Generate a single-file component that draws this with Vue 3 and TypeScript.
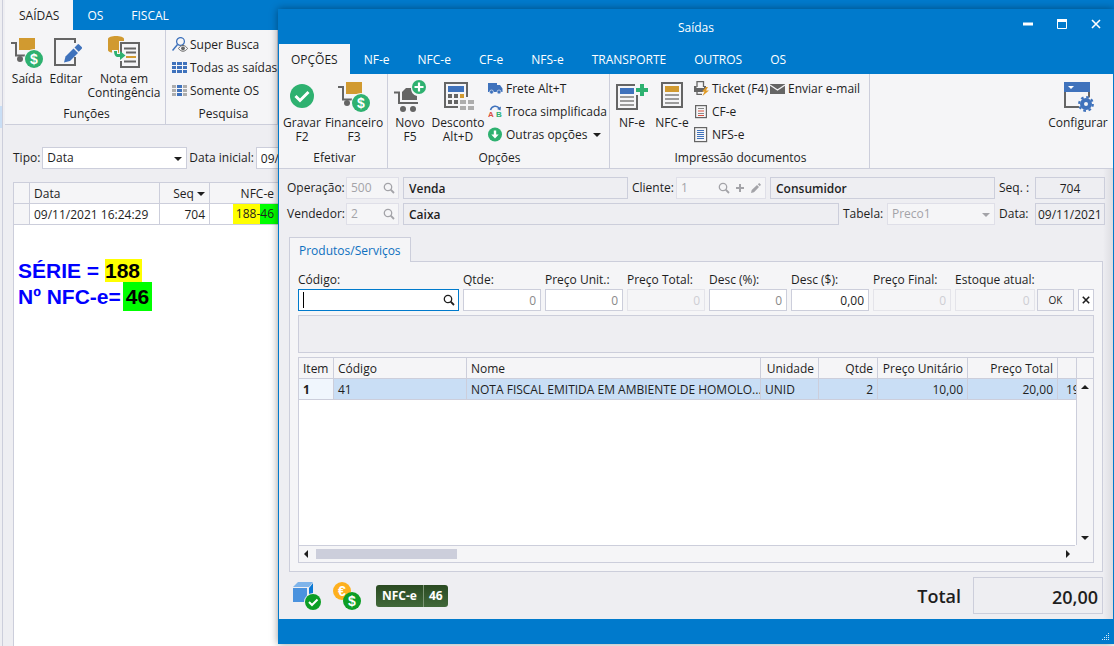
<script setup lang="ts">
import { ref } from 'vue'

interface Action {
  icon: string
  label: string
  size: string
}
interface SmallAction {
  icon: string
  label: string
  menu?: boolean
}
interface Group {
  title: string
  actions: Action[]
  columns: SmallAction[][]
  size: string
}
interface Field {
  id: string
  label: string
  value: string
  state: string
}

const backTabs: string[] = ['SAÍDAS', 'OS', 'FISCAL']
const dialogTabs: string[] = ['OPÇÕES', 'NF-e', 'NFC-e', 'CF-e', 'NFS-e', 'TRANSPORTE', 'OUTROS', 'OS']

const backGroups: Group[] = [
  {
    title: 'Funções',
    size: 'g-func',
    actions: [
      { icon: 'cart-money', label: 'Saída', size: 'w38' },
      { icon: 'edit', label: 'Editar', size: 'w40' },
      { icon: 'contingency', label: 'Nota em\nContingência', size: 'w76' },
    ],
    columns: [],
  },
  {
    title: 'Pesquisa',
    size: 'g-search',
    actions: [],
    columns: [
      [
        { icon: 'super-search', label: 'Super Busca' },
        { icon: 'grid-blue', label: 'Todas as saídas' },
        { icon: 'grid-mixed', label: 'Somente OS' },
      ],
    ],
  },
]

const dialogGroups: Group[] = [
  {
    title: 'Efetivar',
    size: 'g-commit',
    actions: [
      { icon: 'check', label: 'Gravar\nF2', size: 'w40' },
      { icon: 'cart-money', label: 'Financeiro\nF3', size: 'w64' },
    ],
    columns: [],
  },
  {
    title: 'Opções',
    size: 'g-options',
    actions: [
      { icon: 'cart-new', label: 'Novo\nF5', size: 'w40' },
      { icon: 'calculator', label: 'Desconto\nAlt+D', size: 'w56' },
    ],
    columns: [
      [
        { icon: 'truck', label: 'Frete Alt+T' },
        { icon: 'swap', label: 'Troca simplificada' },
        { icon: 'down', label: 'Outras opções', menu: true },
      ],
    ],
  },
  {
    title: 'Impressão documentos',
    size: 'g-print',
    actions: [
      { icon: 'doc-plus', label: 'NF-e', size: 'w40' },
      { icon: 'doc-orange', label: 'NFC-e', size: 'w40' },
    ],
    columns: [
      [
        { icon: 'printer', label: 'Ticket (F4)' },
        { icon: 'doc-red', label: 'CF-e' },
        { icon: 'doc-blue', label: 'NFS-e' },
      ],
      [{ icon: 'mail', label: 'Enviar e-mail' }],
    ],
  },
]

const fields: Field[] = [
  { id: 'qtde', label: 'Qtde:', value: '0', state: 'zero' },
  { id: 'unit', label: 'Preço Unit.:', value: '0', state: 'zero' },
  { id: 'ptotal', label: 'Preço Total:', value: '0', state: 'off' },
  { id: 'descp', label: 'Desc (%):', value: '0', state: 'zero' },
  { id: 'descv', label: 'Desc ($):', value: '0,00', state: 'on' },
  { id: 'pfinal', label: 'Preço Final:', value: '0', state: 'off' },
  { id: 'estoque', label: 'Estoque atual:', value: '0', state: 'off' },
]

const codigo = ref('')
const tipo = ref('Data')
const tabela = ref('Preco1')
</script>

<template>
  <svg class="defs" aria-hidden="true">
    <symbol id="cart-money" viewBox="0 0 32 32">
      <path d="M0 7h5v12.5h9" fill="none" stroke="#656565" stroke-width="2" />
      <rect x="8" y="2" width="16" height="12" fill="#d19a30" />
      <circle cx="9" cy="23" r="3" fill="#656565" />
      <circle cx="23" cy="23" r="10" fill="#f5f5f7" />
      <circle cx="23" cy="23" r="9" fill="#2eb170" />
      <text x="23" y="28" text-anchor="middle" class="coin">$</text>
    </symbol>
    <symbol id="edit" viewBox="0 0 32 32">
      <path d="M25 7V3H5v26h20v-8" fill="none" stroke="#656565" stroke-width="2" />
      <path d="m13 28 1.500-7.500L28.500 7l4 4-13 14z" fill="#f5f5f7" />
      <path d="m14 26.500 1.500-6L23.500 12.500l4.500 4.500-8 8z" fill="#3f72bc" />
      <path d="m24.500 11.500 3-3q.8-.8 1.600 0l2.600 2.600q.8.8 0 1.600l-3 3z" fill="#3f72bc" />
    </symbol>
    <symbol id="contingency" viewBox="0 0 32 32">
      <path d="M0 3v11c0 2 3.500 3 8 3s8-1 8-3V3c0-4-16-4-16 0z" fill="#d19a30" />
      <path d="M11 17V5h6v2h-4v10z" fill="#f5f5f7" />
      <rect x="13" y="7" width="18" height="24" fill="#f5f5f7" stroke="#656565" stroke-width="2" />
      <path d="M16 12.500h12M18 16.500h10M16 25.500h12" stroke="#656565" stroke-width="1.800" />
      <path d="M18 21h10" stroke="#d19a30" stroke-width="2" />
      <path d="M4 14h6v3h4v8H8c-3-2-4-4-4-11z" fill="#f5f5f7" />
      <path d="M6 15h3v3h3v-3l5.500 4.500L12 24v-3H9q-3-1-3-6z" fill="#2eb170" />
    </symbol>
    <symbol id="super-search" viewBox="0 0 16 16">
      <circle cx="8.500" cy="4.500" r="3.900" fill="none" stroke="#3f72bc" stroke-width="1.300" />
      <path d="m5.500 7.500-5 6" stroke="#3f72bc" stroke-width="1.500" />
      <path d="M6.500 11.500c2.500-4 6.500-4 9 0-2.500 3.600-6.500 3.600-9 0z" fill="#f5f5f7" stroke="#656565" />
      <circle cx="11" cy="11.300" r="1.900" fill="#656565" />
    </symbol>
    <symbol id="grid-blue" viewBox="0 0 16 16">
      <path d="M0 2h4v3H0zM5 2h5v3H5zM11 2h4v3h-4zM0 6h4v3H0zM5 6h5v3H5zM11 6h4v3h-4zM0 10h4v3H0zM5 10h5v3H5zM11 10h4v3h-4z" fill="#3f72bc" />
    </symbol>
    <symbol id="grid-mixed" viewBox="0 0 16 16">
      <path d="M0 2h4v3H0zM11 2h4v3h-4zM0 6h4v3H0zM11 6h4v3h-4zM0 10h4v3H0zM11 10h4v3h-4z" fill="#adadad" />
      <path d="M5 2h5v3H5zM5 6h5v3H5zM5 10h5v3H5z" fill="#3f72bc" />
    </symbol>
    <symbol id="check" viewBox="0 0 32 32">
      <circle cx="16" cy="16" r="12" fill="#2eb170" />
      <path d="m9.500 16 4.500 4.500 8.500-8.500" fill="none" stroke="#fff" stroke-width="3" />
    </symbol>
    <symbol id="cart-new" viewBox="0 0 32 32">
      <path d="M0 12.500h5V23h19" fill="none" stroke="#656565" stroke-width="2" />
      <path d="M8 12l4-4h5c0 4 2 7 6 8v4H8z" fill="#656565" />
      <circle cx="9" cy="29" r="3" fill="#656565" />
      <circle cx="19" cy="29" r="3" fill="#656565" />
      <circle cx="25" cy="7" r="7" fill="#2eb170" />
      <path d="M25 2.500v9M20.500 7h9" stroke="#fff" stroke-width="2.200" />
    </symbol>
    <symbol id="calculator" viewBox="0 0 32 32">
      <path d="M25 17V3H3v24h13" fill="none" stroke="#656565" stroke-width="2" />
      <path d="M6 6h16v6H6z" fill="#3f72bc" />
      <path d="M6 14h4v4H6zM12 14h4v4h-4zM6 20h4v4H6zM12 20h4v4h-4z" fill="#656565" />
      <path d="M18 14h4v4h-4z" fill="#d19a30" />
      <path d="M18 20h6v4h-6zM26 20h6v4h-6zM18 26h6v4h-6zM26 26h6v4h-6z" fill="#adadad" />
    </symbol>
    <symbol id="doc-plus" viewBox="0 0 32 32">
      <path d="M19 5H1v24h20V15" fill="none" stroke="#656565" stroke-width="2" />
      <path d="M4 8h14v6H4z" fill="#3f72bc" />
      <path d="M4 17h14M4 21h14M4 25h14" stroke="#7d7d7d" stroke-width="1.600" />
      <path d="M26 4v12M20 10h12" stroke="#2eb170" stroke-width="4" />
    </symbol>
    <symbol id="doc-orange" viewBox="0 0 32 32">
      <rect x="6" y="3" width="20" height="24" fill="none" stroke="#656565" stroke-width="2" />
      <path d="M9 6h14v6H9z" fill="#d19a30" />
      <path d="M9 15h14M9 19h14M9 23h14" stroke="#7d7d7d" stroke-width="1.600" />
    </symbol>
    <symbol id="truck" viewBox="0 0 16 16">
      <path d="M0 2h9v9H0zM9 4h3l2.500 3.500V11H9z" fill="#3f72bc" />
      <circle cx="3.500" cy="11" r="2" fill="#3f72bc" stroke="#f5f5f7" stroke-width=".6" />
      <circle cx="11" cy="11" r="2" fill="#3f72bc" stroke="#f5f5f7" stroke-width=".6" />
    </symbol>
    <symbol id="swap" viewBox="0 0 16 16">
      <path d="M2.500 6C4 1.500 9 1 11.500 4.500" fill="none" stroke="#3f72bc" stroke-width="1.500" />
      <path d="m13 2.500-.5 4-3.500-1.500z" fill="#3f72bc" />
      <text x="0" y="13" class="letter" fill="#d9503f">A</text>
      <text x="8" y="13" class="letter" fill="#2eb170">B</text>
    </symbol>
    <symbol id="down" viewBox="0 0 16 16">
      <circle cx="7" cy="7.500" r="7" fill="#2eb170" />
      <path d="M5.800 3.500h2.400v4h2.500L7 11.500 3.300 7.500h2.500z" fill="#fff" />
    </symbol>
    <symbol id="printer" viewBox="0 0 16 16">
      <path d="M3 6V.7h6.500V6M3 9v4.300h5" fill="none" stroke="#656565" stroke-width="1.300" />
      <path d="M0 5h2.500v2h7.500V5h2v2l-3 4H0z" fill="#656565" />
      <path d="m12 6-4 4.500h2.500L8.500 15l6.500-5.500h-3L14 6z" fill="#e09a25" />
    </symbol>
    <symbol id="doc-red" viewBox="0 0 16 16">
      <rect x="1.600" y="1.600" width="10.800" height="12" fill="none" stroke="#656565" stroke-width="1.200" />
      <path d="M4 4.500h6M4 9.500h6" stroke="#888" />
      <path d="M4 7h6M4 11.500h6" stroke="#d9503f" stroke-width="1.200" />
    </symbol>
    <symbol id="doc-blue" viewBox="0 0 16 16">
      <rect x=".6" y=".6" width="12" height="14" fill="none" stroke="#656565" stroke-width="1.200" />
      <path d="M3 3.500h7M3 5.500h7M3 7.500h7M3 9.500h7M3 11.500h7" stroke="#3f72bc" />
    </symbol>
    <symbol id="mail" viewBox="0 0 16 16">
      <path d="M0 3h15v10H0z" fill="#656565" />
      <path d="m0 4 7.500 5L15 4" fill="none" stroke="#f5f5f7" stroke-width="1.300" />
    </symbol>
    <symbol id="config" viewBox="0 0 32 32">
      <path d="M3 10v17h14M27 10v8" fill="none" stroke="#656565" stroke-width="2" />
      <path d="M2 2h26v10H2z" fill="#3f72bc" />
      <path d="M6 6h6l-3 3z" fill="#fff" />
      <circle cx="24" cy="24" r="7.500" fill="#f5f5f7" />
      <circle cx="24" cy="24" r="4" fill="none" stroke="#3f72bc" stroke-width="4" />
      <circle cx="24" cy="24" r="6.800" fill="none" stroke="#3f72bc" stroke-width="2.200" stroke-dasharray="2.670 2.670" />
    </symbol>
    <symbol id="lens" viewBox="0 0 12 12">
      <circle cx="5" cy="5" r="3.700" fill="none" stroke="currentColor" stroke-width="1.300" />
      <path d="m7.700 7.700 3.300 3.300" stroke="currentColor" stroke-width="1.800" />
    </symbol>
    <symbol id="plus" viewBox="0 0 12 12">
      <path d="M6 2v8M2 6h8" stroke="currentColor" stroke-width="2" />
    </symbol>
    <symbol id="pencil" viewBox="0 0 12 12">
      <path d="m1 11 .7-3L7 3l2 2-5 5.300zM7.800 2.200 9.200 1l1.800 1.800-1.200 1.400z" fill="currentColor" />
    </symbol>
    <symbol id="caret" viewBox="0 0 8 4">
      <path d="M0 0h8L4 4z" fill="currentColor" />
    </symbol>
  </svg>

  <div class="desktop">
    <div class="edge"><div class="edge-mark"></div></div>
    <main class="back">
      <nav class="tabs">
        <button v-for="(t, i) in backTabs" :key="t" type="button" :class="['tab', { active: i === 0 }]">{{ t }}</button>
      </nav>
      <div class="ribbon">
        <section v-for="g in backGroups" :key="g.title" :class="['group', g.size]">
          <div class="group-body">
            <button v-for="a in g.actions" :key="a.icon" type="button" :class="['big', a.size]">
              <svg class="i32"><use :href="'#' + a.icon" /></svg>
              <span>{{ a.label }}</span>
            </button>
            <div v-for="(c, ci) in g.columns" :key="ci" class="small-col">
              <button v-for="s in c" :key="s.label" type="button" class="small">
                <svg class="i16"><use :href="'#' + s.icon" /></svg>{{ s.label }}
              </button>
            </div>
          </div>
          <h2 class="group-title">{{ g.title }}</h2>
        </section>
      </div>
      <div class="filters">
        <label for="tipo">Tipo:</label>
        <div class="select-box tipo">
          <select id="tipo" v-model="tipo"><option>Data</option></select>
          <svg class="caret"><use href="#caret" /></svg>
        </div>
        <label for="inicial">Data inicial:</label>
        <input id="inicial" class="box date" value="09/11/2021" />
      </div>
      <div class="list">
        <table class="list-table">
          <colgroup><col class="c-mark" /><col class="c-date" /><col class="c-seq" /><col class="c-nfce" /><col /></colgroup>
          <thead>
            <tr>
              <th></th>
              <th>Data</th>
              <th class="num">Seq <svg class="caret"><use href="#caret" /></svg></th>
              <th class="num">NFC-e</th>
              <th></th>
            </tr>
          </thead>
          <tbody>
            <tr>
              <td class="mark"></td>
              <td>09/11/2021 16:24:29</td>
              <td class="num">704</td>
              <td class="nfce"><div><span class="yellow">188-</span><span class="green">46</span></div></td>
              <td></td>
            </tr>
          </tbody>
        </table>
        <div class="note">
          <p>SÉRIE = <mark class="yellow">188</mark></p>
          <p>Nº NFC-e=<mark class="green tall">46</mark></p>
        </div>
      </div>
    </main>

    <section class="dialog" role="dialog" aria-label="Saídas">
      <header class="titlebar">
        <h1>Saídas</h1>
        <div class="controls">
          <button type="button" aria-label="Minimizar"><svg viewBox="0 0 12 12"><path d="M1 6h10" stroke="#fff" stroke-width="3" /></svg></button>
          <button type="button" aria-label="Maximizar"><svg viewBox="0 0 12 12"><path d="M1.500 1.500h9v9h-9z" fill="none" stroke="#fff" /><path d="M1 1h10v3H1z" fill="#fff" /></svg></button>
          <button type="button" aria-label="Fechar"><svg viewBox="0 0 12 12"><path d="m2 2 8 8M10 2l-8 8" stroke="#fff" stroke-width="1.600" /></svg></button>
        </div>
      </header>
      <nav class="tabs">
        <button v-for="(t, i) in dialogTabs" :key="t" type="button" :class="['tab', { active: i === 0 }]">{{ t }}</button>
      </nav>
      <div class="ribbon">
        <section v-for="g in dialogGroups" :key="g.title" :class="['group', g.size]">
          <div class="group-body">
            <button v-for="a in g.actions" :key="a.icon" type="button" :class="['big', a.size]">
              <svg class="i32"><use :href="'#' + a.icon" /></svg>
              <span>{{ a.label }}</span>
            </button>
            <div v-for="(c, ci) in g.columns" :key="ci" class="small-col">
              <button v-for="s in c" :key="s.label" type="button" class="small">
                <svg class="i16"><use :href="'#' + s.icon" /></svg>{{ s.label }}
                <svg v-if="s.menu" class="caret menu"><use href="#caret" /></svg>
              </button>
            </div>
          </div>
          <h2 class="group-title">{{ g.title }}</h2>
        </section>
        <button type="button" class="big config">
          <svg class="i32"><use href="#config" /></svg>
          <span>Configurar</span>
        </button>
      </div>

      <div class="body">
        <div class="form">
          <div class="form-row">
            <label for="operacao" class="lead">Operação:</label>
            <div class="box off code">
              <input id="operacao" value="500" disabled />
              <svg class="i12"><use href="#lens" /></svg>
            </div>
            <input class="box read" aria-label="Nome da operação" value="Venda" readonly />
            <label for="cliente" class="mid">Cliente:</label>
            <div class="box off client">
              <input id="cliente" value="1" disabled />
              <svg class="i12"><use href="#lens" /></svg>
              <svg class="i12"><use href="#plus" /></svg>
              <svg class="i12"><use href="#pencil" /></svg>
            </div>
            <input class="box read" aria-label="Nome do cliente" value="Consumidor" readonly />
            <label for="seq" class="tail">Seq. :</label>
            <input id="seq" class="box plain center" value="704" readonly />
          </div>
          <div class="form-row">
            <label for="vendedor" class="lead">Vendedor:</label>
            <div class="box off code">
              <input id="vendedor" value="2" disabled />
              <svg class="i12"><use href="#lens" /></svg>
            </div>
            <input class="box read" aria-label="Nome do vendedor" value="Caixa" readonly />
            <label for="tabela" class="mid">Tabela:</label>
            <div class="select-box off tabela">
              <select id="tabela" v-model="tabela" disabled><option>Preco1</option></select>
              <svg class="caret"><use href="#caret" /></svg>
            </div>
            <label for="data" class="tail">Data:</label>
            <input id="data" class="box plain" value="09/11/2021" readonly />
          </div>
        </div>

        <div class="page-tabs"><button type="button" class="page-tab">Produtos/Serviços</button></div>
        <div class="panel">
          <div class="fields">
            <div class="field grow">
              <label for="codigo">Código:</label>
              <div class="box focus">
                <input id="codigo" v-model="codigo" />
                <span class="cursor"></span>
                <svg class="i12"><use href="#lens" /></svg>
              </div>
            </div>
            <div v-for="f in fields" :key="f.id" class="field">
              <label :for="f.id">{{ f.label }}</label>
              <input :id="f.id" :class="['box', 'amount', f.state]" :value="f.value" :disabled="f.state === 'off'" />
            </div>
            <button type="button" class="ok">OK</button>
            <button type="button" class="clear" aria-label="Limpar"><svg viewBox="0 0 10 10"><path d="m1 1 8 8M9 1 1 9" stroke="#1e1e1e" stroke-width="2" /></svg></button>
          </div>
          <div class="info"></div>
          <div class="grid">
            <div class="grid-view">
              <table class="items">
                <colgroup><col class="c-item" /><col class="c-code" /><col /><col class="c-unit" /><col class="c-qty" /><col class="c-90" /><col class="c-90" /><col class="c-18" /></colgroup>
                <thead>
                  <tr>
                    <th>Item</th><th>Código</th><th>Nome</th><th class="num">Unidade</th><th class="num">Qtde</th><th class="num">Preço Unitário</th><th class="num">Preço Total</th><th></th>
                  </tr>
                </thead>
                <tbody>
                  <tr>
                    <td class="first">1</td><td>41</td><td class="name">NOTA FISCAL EMITIDA EM AMBIENTE DE HOMOLO...</td><td>UNID</td><td class="num">2</td><td class="num">10,00</td><td class="num">20,00</td><td class="cut">19</td>
                  </tr>
                </tbody>
              </table>
            </div>
            <div class="vscroll">
              <div class="vhead"></div>
              <svg class="up" viewBox="0 0 8 4"><path d="M0 4h8L4 0z" fill="#1e1e1e" /></svg>
              <svg class="dn" viewBox="0 0 8 4"><path d="M0 0h8L4 4z" fill="#1e1e1e" /></svg>
            </div>
            <div class="hscroll">
              <svg viewBox="0 0 4 8"><path d="M4 0v8L0 4z" fill="#1e1e1e" /></svg>
              <div class="track"><div class="thumb"></div></div>
              <svg viewBox="0 0 4 8"><path d="M0 0v8l4-4z" fill="#1e1e1e" /></svg>
            </div>
          </div>
        </div>

        <footer class="foot">
          <svg class="i28" viewBox="0 0 28 28">
            <path d="M0 6h14v14H0z" fill="#4a92de" /><path d="M0 5 5 0h15l-4 5z" fill="#7fb4ea" /><path d="m16 6 4-5v12l-4 3z" fill="#0b78d4" />
            <circle cx="20" cy="20" r="9" fill="#eeeef2" /><circle cx="20" cy="20" r="8" fill="#0c9e25" /><path d="m16 20 3 3 5.500-5.500" fill="none" stroke="#fff" stroke-width="2" />
          </svg>
          <svg class="i28" viewBox="0 0 28 28">
            <circle cx="9" cy="9" r="9" fill="#fdb01e" /><text x="9" y="14" text-anchor="middle" class="coin">€</text>
            <circle cx="19" cy="19" r="9" fill="#0c9e25" /><text x="19" y="24" text-anchor="middle" class="coin">$</text>
          </svg>
          <div class="badge"><span>NFC-e</span><span>46</span></div>
          <label for="total" class="total-label">Total</label>
          <input id="total" class="total" value="20,00" readonly />
        </footer>
      </div>
      <div class="status">
        <svg viewBox="0 0 8 8"><path d="M6 0h1v1H6zM4 2h1v1H4zM6 2h1v1H6zM2 4h1v1H2zM4 4h1v1H4zM6 4h1v1H6zM0 6h1v1H0zM2 6h1v1H2zM4 6h1v1H4zM6 6h1v1H6z" fill="#d5e8f8" /></svg>
      </div>
    </section>
  </div>
</template>

<style>
body {
  margin: 0;
}
</style>

<style scoped>
* {
  box-sizing: border-box;
}
.desktop {
  position: relative;
  display: flex;
  min-height: 100vh;
  overflow: hidden;
  background: #eeeef2;
  color: #1e1e1e;
  font: 12px/14px 'Open Sans', 'Noto Sans', sans-serif;
}
button,
input,
select {
  margin: 0;
  padding: 0;
  border: 0;
  border-radius: 0;
  outline: 0;
  background: none;
  color: inherit;
  font: inherit;
  min-width: 0;
  appearance: none;
}
input:disabled,
select:disabled {
  opacity: 1;
}
h1,
h2,
p {
  margin: 0;
  font: inherit;
}
label {
  white-space: nowrap;
}
svg {
  display: block;
  flex: none;
}
.defs {
  display: none;
}
.coin {
  fill: #fff;
  font: bold 14px 'Liberation Sans', sans-serif;
}
.letter {
  font: bold 8px 'Liberation Sans', sans-serif;
}
.i32 {
  width: 32px;
  height: 32px;
  margin-bottom: 4px;
}
.i28 {
  width: 28px;
  height: 28px;
}
.i16 {
  width: 16px;
  height: 16px;
}
.i12 {
  width: 12px;
  height: 12px;
}
.caret {
  width: 8px;
  height: 4px;
}

/* Background window */
.edge {
  width: 5px;
  padding-top: 106px;
  border-right: 2px solid #eeeef2;
  box-shadow: inset -1px 0 #cccedb;
}
.edge-mark {
  width: 2px;
  height: 22px;
  background: #c9def5;
}
.back {
  flex: 1;
  min-width: 0;
  display: flex;
  flex-direction: column;
}
.tabs {
  display: flex;
  height: 30px;
  background: #007acc;
}
.tab {
  padding: 2px 14px 0;
  color: #fff;
}
.tab.active {
  background: #f5f5f7;
  color: #1e1e1e;
}
.dialog .tab.active {
  padding: 2px 12px 0;
}
.ribbon {
  display: flex;
  height: 95px;
  background: #f5f5f7;
  border-bottom: 1px solid #cccedb;
}
.group {
  display: flex;
  flex-direction: column;
  border-right: 1px solid #cccedb;
}
.g-func {
  width: 161px;
  padding-left: 3px;
}
.g-search {
  width: 112px;
  padding-left: 4px;
}
.g-commit {
  width: 109px;
  padding-left: 3px;
}
.g-options {
  width: 222px;
  padding-left: 2px;
}
.g-print {
  width: 260px;
  padding-left: 2px;
}
.group-body {
  display: flex;
  flex: 1;
}
.group-title {
  height: 17px;
  text-align: center;
}
.big {
  display: flex;
  flex-direction: column;
  align-items: center;
  justify-content: flex-start;
  padding-top: 6px;
  white-space: pre;
}
.w38 {
  width: 38px;
}
.w40 {
  width: 40px;
}
.w56 {
  width: 56px;
}
.w64 {
  width: 64px;
}
.w76 {
  width: 76px;
}
.small-col {
  padding: 3px 0 0 2px;
}
.small {
  display: flex;
  align-items: center;
  gap: 2px;
  height: 23px;
  white-space: nowrap;
}
.menu {
  margin-left: 4px;
}
.config {
  margin-left: auto;
  width: 70px;
}
.filters {
  display: flex;
  align-items: center;
  gap: 2px;
  margin: 22px 0 13px 8px;
  white-space: nowrap;
}
.box,
.select-box {
  height: 22px;
  border: 1px solid #cccedb;
  background: #fff;
}
.select-box {
  position: relative;
}
.select-box select {
  width: 100%;
  height: 20px;
  padding: 0 4px;
}
.select-box .caret {
  position: absolute;
  right: 4px;
  top: 9px;
}
.tipo {
  width: 145px;
}
.date {
  width: 90px;
  padding: 0 4px;
}
.list {
  flex: 1;
  margin-left: 8px;
  background: #fff;
  border-left: 1px solid #cccedb;
}
table {
  width: 100%;
  table-layout: fixed;
  border-collapse: separate;
  border-spacing: 0;
}
th,
td {
  height: 21px;
  padding: 1px 4px 0;
  border-right: 1px solid #cccedb;
  border-bottom: 1px solid #cccedb;
  font-weight: 400;
  text-align: left;
  white-space: nowrap;
  overflow: hidden;
}
th {
  background: #f5f5f7;
}
.num {
  text-align: right;
}
.list-table th {
  height: 22px;
  border-top: 1px solid #cccedb;
}
.list-table th .caret {
  display: inline-block;
  vertical-align: middle;
}
.mark {
  background: #f5f5f7;
}
.c-mark {
  width: 16px;
}
.c-date {
  width: 130px;
}
.c-seq {
  width: 50px;
}
.c-nfce {
  width: 69px;
}
.yellow {
  background: #ff0;
}
.green {
  background: #0f0;
}
.nfce {
  padding: 0;
}
.nfce div {
  display: flex;
  justify-content: flex-end;
  line-height: 20px;
}
.nfce .yellow {
  padding-left: 3px;
}
.nfce .green {
  padding-right: 4px;
}
.note {
  padding: 33px 4px;
  color: #00f;
  font: bold 21px/26px 'Liberation Sans', Arial, sans-serif;
}
.note mark {
  color: #000;
}
.note .yellow {
  padding-right: 2px;
}
.note .tall {
  margin-left: 2px;
  padding: 3px;
}

/* Dialog window */
.dialog {
  position: absolute;
  inset: 9px 0 2px 278px;
  display: flex;
  flex-direction: column;
  border: 1px solid #007acc;
  border-bottom: 0;
  background: #eeeef2;
  box-shadow: 0 0 8px rgba(0, 0, 0, 0.4);
}
.titlebar {
  position: relative;
  display: flex;
  align-items: center;
  justify-content: center;
  height: 34px;
  padding-top: 2px;
  background: #007acc;
  color: #fff;
}
.controls {
  position: absolute;
  right: 0;
  top: 0;
  display: flex;
}
.controls button {
  display: grid;
  place-items: center;
  width: 34px;
  height: 28px;
}
.controls svg {
  width: 12px;
  height: 12px;
}
.body {
  flex: 1;
  display: flex;
  flex-direction: column;
  padding: 8px 8px 5px;
  background: linear-gradient(to left, #dcdce1, #eeeef2 10px);
}
.form {
  display: grid;
  gap: 4px;
}
.form-row {
  display: flex;
  align-items: center;
  gap: 4px;
}
.lead {
  width: 55px;
}
.mid {
  width: 40px;
}
.tail {
  width: 32px;
}
.off,
.off select {
  border-color: #dfdfe8;
  background: #f5f5f7;
  color: #a3a3a8;
}
.code,
.client,
.focus {
  display: flex;
  align-items: center;
  gap: 4px;
  padding: 0 3px 0 4px;
}
.code input,
.client input,
.focus input {
  flex: 1;
  width: 0;
}
.code {
  width: 53px;
}
.client {
  width: 90px;
}
.read {
  flex: 1;
  padding: 0 5px;
  background: transparent;
  font-weight: 600;
}
.plain {
  width: 70px;
  padding: 0 2px;
  background: transparent;
}
.center {
  text-align: center;
}
.tabela {
  width: 108px;
}
.page-tabs {
  display: flex;
  margin: 12px 2px 0;
}
.page-tab {
  height: 25px;
  padding: 2px 9px 0;
  border: 1px solid #cccedb;
  border-bottom: 0;
  margin-bottom: -1px;
  background: #f5f5f7;
  color: #0e70c0;
  z-index: 1;
}
.panel {
  flex: 1;
  display: flex;
  flex-direction: column;
  gap: 4px;
  margin: 0 2px;
  padding: 8px;
  border: 1px solid #cccedb;
  background: #f5f5f7;
}
.fields {
  display: flex;
  align-items: flex-end;
  gap: 4px;
}
.field {
  display: grid;
  gap: 2px;
  width: 78px;
  padding-top: 3px;
}
.grow {
  flex: 1;
}
.focus {
  position: relative;
  border-color: #007acc;
}
.cursor {
  position: absolute;
  left: 4px;
  top: 2px;
  width: 1px;
  height: 16px;
  background: #000;
}
.amount {
  width: 100%;
  padding: 0 4px;
  text-align: right;
}
.zero {
  color: #8a8a8a;
}
.amount.off {
  border-color: #e4e4ea;
  color: #ceced4;
}
.ok {
  width: 37px;
  height: 22px;
  border: 1px solid #cccedb;
  font-size: 10px;
}
.clear {
  display: grid;
  place-items: center;
  width: 16px;
  height: 22px;
  border: 1px solid #cccedb;
  background: #fff;
}
.clear svg {
  width: 8px;
  height: 8px;
}
.info {
  height: 38px;
  border: 1px solid #cccedb;
  background: #eeeef2;
}
.grid {
  flex: 1;
  display: grid;
  grid-template: 1fr 17px / 1fr 17px;
  border: 1px solid #cccedb;
}
.grid-view {
  min-width: 0;
  background: #fff;
}
.items tr > :last-child {
  border-right: 0;
}
.items td {
  background: #c9def5;
}
.items td.first {
  background: #f0f6fd;
  font-weight: 700;
}
.items .name {
  padding-right: 0;
}
.items .cut {
  padding: 1px 0 0 8px;
  text-overflow: clip;
}
.c-item {
  width: 35px;
}
.c-code {
  width: 133px;
}
.c-unit {
  width: 58px;
}
.c-qty {
  width: 59px;
}
.c-90 {
  width: 90px;
}
.c-18 {
  width: 18px;
}
.vscroll {
  display: flex;
  flex-direction: column;
  align-items: center;
  border-left: 1px solid #cccedb;
}
.vhead {
  align-self: stretch;
  height: 21px;
  border-bottom: 1px solid #cccedb;
}
.up,
.dn {
  width: 8px;
  height: 4px;
}
.up {
  margin-top: 6px;
}
.dn {
  margin: auto 0 5px;
}
.hscroll {
  display: flex;
  align-items: center;
  gap: 8px;
  margin-right: 1px;
  padding: 0 5px;
  border-top: 1px solid #cccedb;
}
.hscroll svg {
  width: 4px;
  height: 8px;
}
.track {
  flex: 1;
}
.thumb {
  width: 19%;
  height: 10px;
  background: #cccedb;
}
.foot {
  display: flex;
  align-items: center;
  gap: 12px;
  margin: 5px 2px 0 6px;
}
.badge {
  display: flex;
  margin-left: 3px;
  border-radius: 3px;
  overflow: hidden;
  background: linear-gradient(#2a4a22, #41683a);
  color: #fff;
  font-weight: 700;
  line-height: 22px;
}
.badge span {
  padding: 0 6px;
}
.badge span + span {
  padding: 0 5px;
  border-left: 1px solid #7b9474;
}
.total-label {
  margin-left: auto;
}
.total-label,
.total {
  font: 600 18px/24px 'Open Sans', sans-serif;
}
.total {
  width: 130px;
  height: 37px;
  padding: 2px 4px 0;
  border: 1px solid #cccedb;
  text-align: right;
}
.status {
  display: flex;
  align-items: flex-end;
  justify-content: flex-end;
  height: 25px;
  padding: 3px;
  background: #007acc;
}
.status svg {
  width: 8px;
  height: 8px;
}
</style>
